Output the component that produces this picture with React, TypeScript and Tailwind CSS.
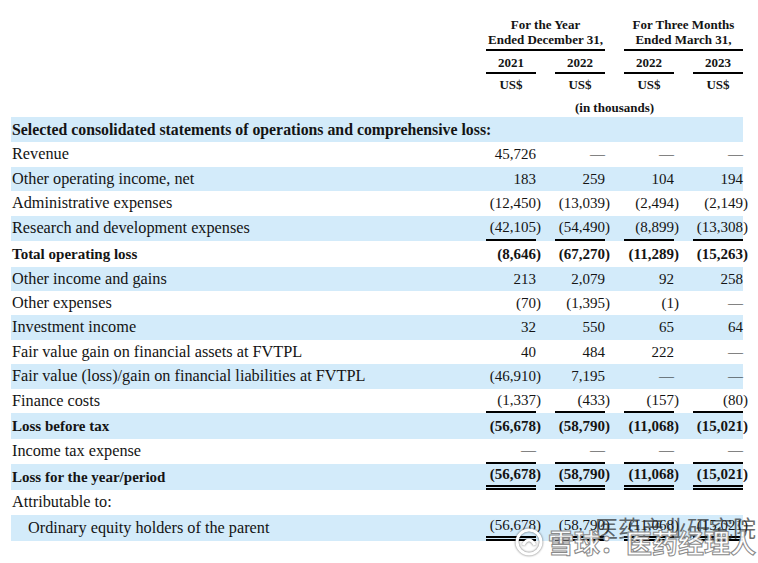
type Line = 'single' | 'double';

interface Row {
  label: string;
  h: string;
  bold?: boolean;
  stripe?: boolean;
  indent?: boolean;
  line?: Line;
  values?: string[];
}

const loss = ['(56,678)', '(58,790)', '(11,068)', '(15,021)'];

const rows: Row[] = [
  { label: 'Selected consolidated statements of operations and comprehensive loss:', h: 'h-[25px]', bold: true, stripe: true },
  { label: 'Revenue', h: 'h-[25px]', values: ['45,726', '—', '—', '—'] },
  { label: 'Other operating income, net', h: 'h-[24px]', stripe: true, values: ['183', '259', '104', '194'] },
  { label: 'Administrative expenses', h: 'h-[25px]', values: ['(12,450)', '(13,039)', '(2,494)', '(2,149)'] },
  { label: 'Research and development expenses', h: 'h-[25px]', stripe: true, line: 'single', values: ['(42,105)', '(54,490)', '(8,899)', '(13,308)'] },
  { label: 'Total operating loss', h: 'h-[26px]', bold: true, values: ['(8,646)', '(67,270)', '(11,289)', '(15,263)'] },
  { label: 'Other income and gains', h: 'h-[24px]', stripe: true, values: ['213', '2,079', '92', '258'] },
  { label: 'Other expenses', h: 'h-[24px]', values: ['(70)', '(1,395)', '(1)', '—'] },
  { label: 'Investment income', h: 'h-[25px]', stripe: true, values: ['32', '550', '65', '64'] },
  { label: 'Fair value gain on financial assets at FVTPL', h: 'h-[24px]', values: ['40', '484', '222', '—'] },
  { label: 'Fair value (loss)/gain on financial liabilities at FVTPL', h: 'h-[25px]', stripe: true, values: ['(46,910)', '7,195', '—', '—'] },
  { label: 'Finance costs', h: 'h-[24px]', line: 'single', values: ['(1,337)', '(433)', '(157)', '(80)'] },
  { label: 'Loss before tax', h: 'h-[26px]', bold: true, stripe: true, values: loss },
  { label: 'Income tax expense', h: 'h-[25px]', line: 'single', values: ['—', '—', '—', '—'] },
  { label: 'Loss for the year/period', h: 'h-[26px]', bold: true, stripe: true, line: 'double', values: loss },
  { label: 'Attributable to:', h: 'h-[25px]' },
  { label: 'Ordinary equity holders of the parent', h: 'h-[26px]', stripe: true, indent: true, line: 'double', values: loss },
];

const Amount = ({ value }: { value: string }) => {
  // closing paren hangs past the column edge, like a printed statement
  if (value.endsWith(')')) {
    return (
      <span className="whitespace-nowrap">
        {value.slice(0, -1)}
        <span className="inline-block w-0">)</span>
      </span>
    );
  }
  return <span className="whitespace-nowrap">{value}</span>;
};

const lineClass = (line?: Line) =>
  line === 'double' ? 'border-b-[5px] border-double border-black' : line === 'single' ? 'border-b-2 border-black' : '';

const labelSize = (row: Row) => (!row.bold ? 'text-[16.25px]' : row.values ? 'text-[15px]' : 'text-[15.8px]');

const StatementRow = ({ row }: { row: Row }) => (
  <div className={`flex ${row.h} ${row.stripe ? 'bg-[#d3ebfa]' : ''} ${row.bold ? 'font-bold' : ''}`}>
    <div className={`flex flex-1 items-center whitespace-nowrap ${row.indent ? 'pl-[17px]' : 'pl-[1px]'} ${labelSize(row)}`}>
      {row.label}
    </div>
    {row.values ? (
      <div className="flex w-[257px] gap-[19px]">
        {row.values.map((value, i) => (
          <div key={i} className={`flex w-[50px] items-center justify-end ${lineClass(row.line)}`}>
            <Amount value={value} />
          </div>
        ))}
      </div>
    ) : null}
  </div>
);

const Watermark = () => (
  <div className="pointer-events-none absolute bottom-[6px] right-[2px] flex items-center gap-[4px]">
    <div className="absolute right-[0px] top-[-11px] text-[23px] leading-none text-[#2a2a2a]/70 [font-family:'Noto_Sans_CJK_SC',sans-serif]">
      医药产业研究院
    </div>
    <svg width="30" height="30" viewBox="0 0 30 30" className="relative drop-shadow-[0_0_1px_rgba(0,0,0,0.6)]">
      <circle cx="15" cy="15" r="12" fill="none" stroke="#fff" strokeWidth="3" />
      <path d="M9 18 q6 -10 12 0" fill="none" stroke="#fff" strokeWidth="3" />
    </svg>
    <span className="relative text-[26px] font-bold leading-none text-white/90 [font-family:'Noto_Sans_CJK_SC',sans-serif] [-webkit-text-stroke:1px_#8a8a8a]">
      雪球：医药经理人
    </span>
  </div>
);

export default function App() {
  return (
    <div className="relative h-[563px] w-[758px] overflow-hidden bg-white text-[15px] text-[#141414] [font-family:'Liberation_Serif','Times_New_Roman',serif]">
      <div className="ml-[11px] w-[732px]">
        <div className="flex h-[117px]">
          <div className="flex-1" />
          <div className="flex w-[257px] flex-col pt-[17px] text-[13px] font-bold leading-[15px]">
            <div className="flex gap-[19px] text-center">
              <div className="w-[119px] border-b-2 border-black pb-[2px]">
                For the Year
                <br />
                Ended December 31,
              </div>
              <div className="w-[119px] border-b-2 border-black pb-[2px]">
                For Three Months
                <br />
                Ended March 31,
              </div>
            </div>
            <div className="flex gap-[19px] pt-[4px] text-center">
              {['2021', '2022', '2022', '2023'].map((year, i) => (
                <div key={i} className="w-[50px] border-b-2 border-black pb-[2px]">
                  {year}
                </div>
              ))}
            </div>
            <div className="flex gap-[19px] pt-[3px] text-center">
              {[0, 1, 2, 3].map((i) => (
                <div key={i} className="w-[50px]">
                  US$
                </div>
              ))}
            </div>
            <div className="mt-[8px] text-center">(in thousands)</div>
          </div>
        </div>
        {rows.map((row, i) => (
          <StatementRow key={i} row={row} />
        ))}
      </div>
      <Watermark />
    </div>
  );
}
